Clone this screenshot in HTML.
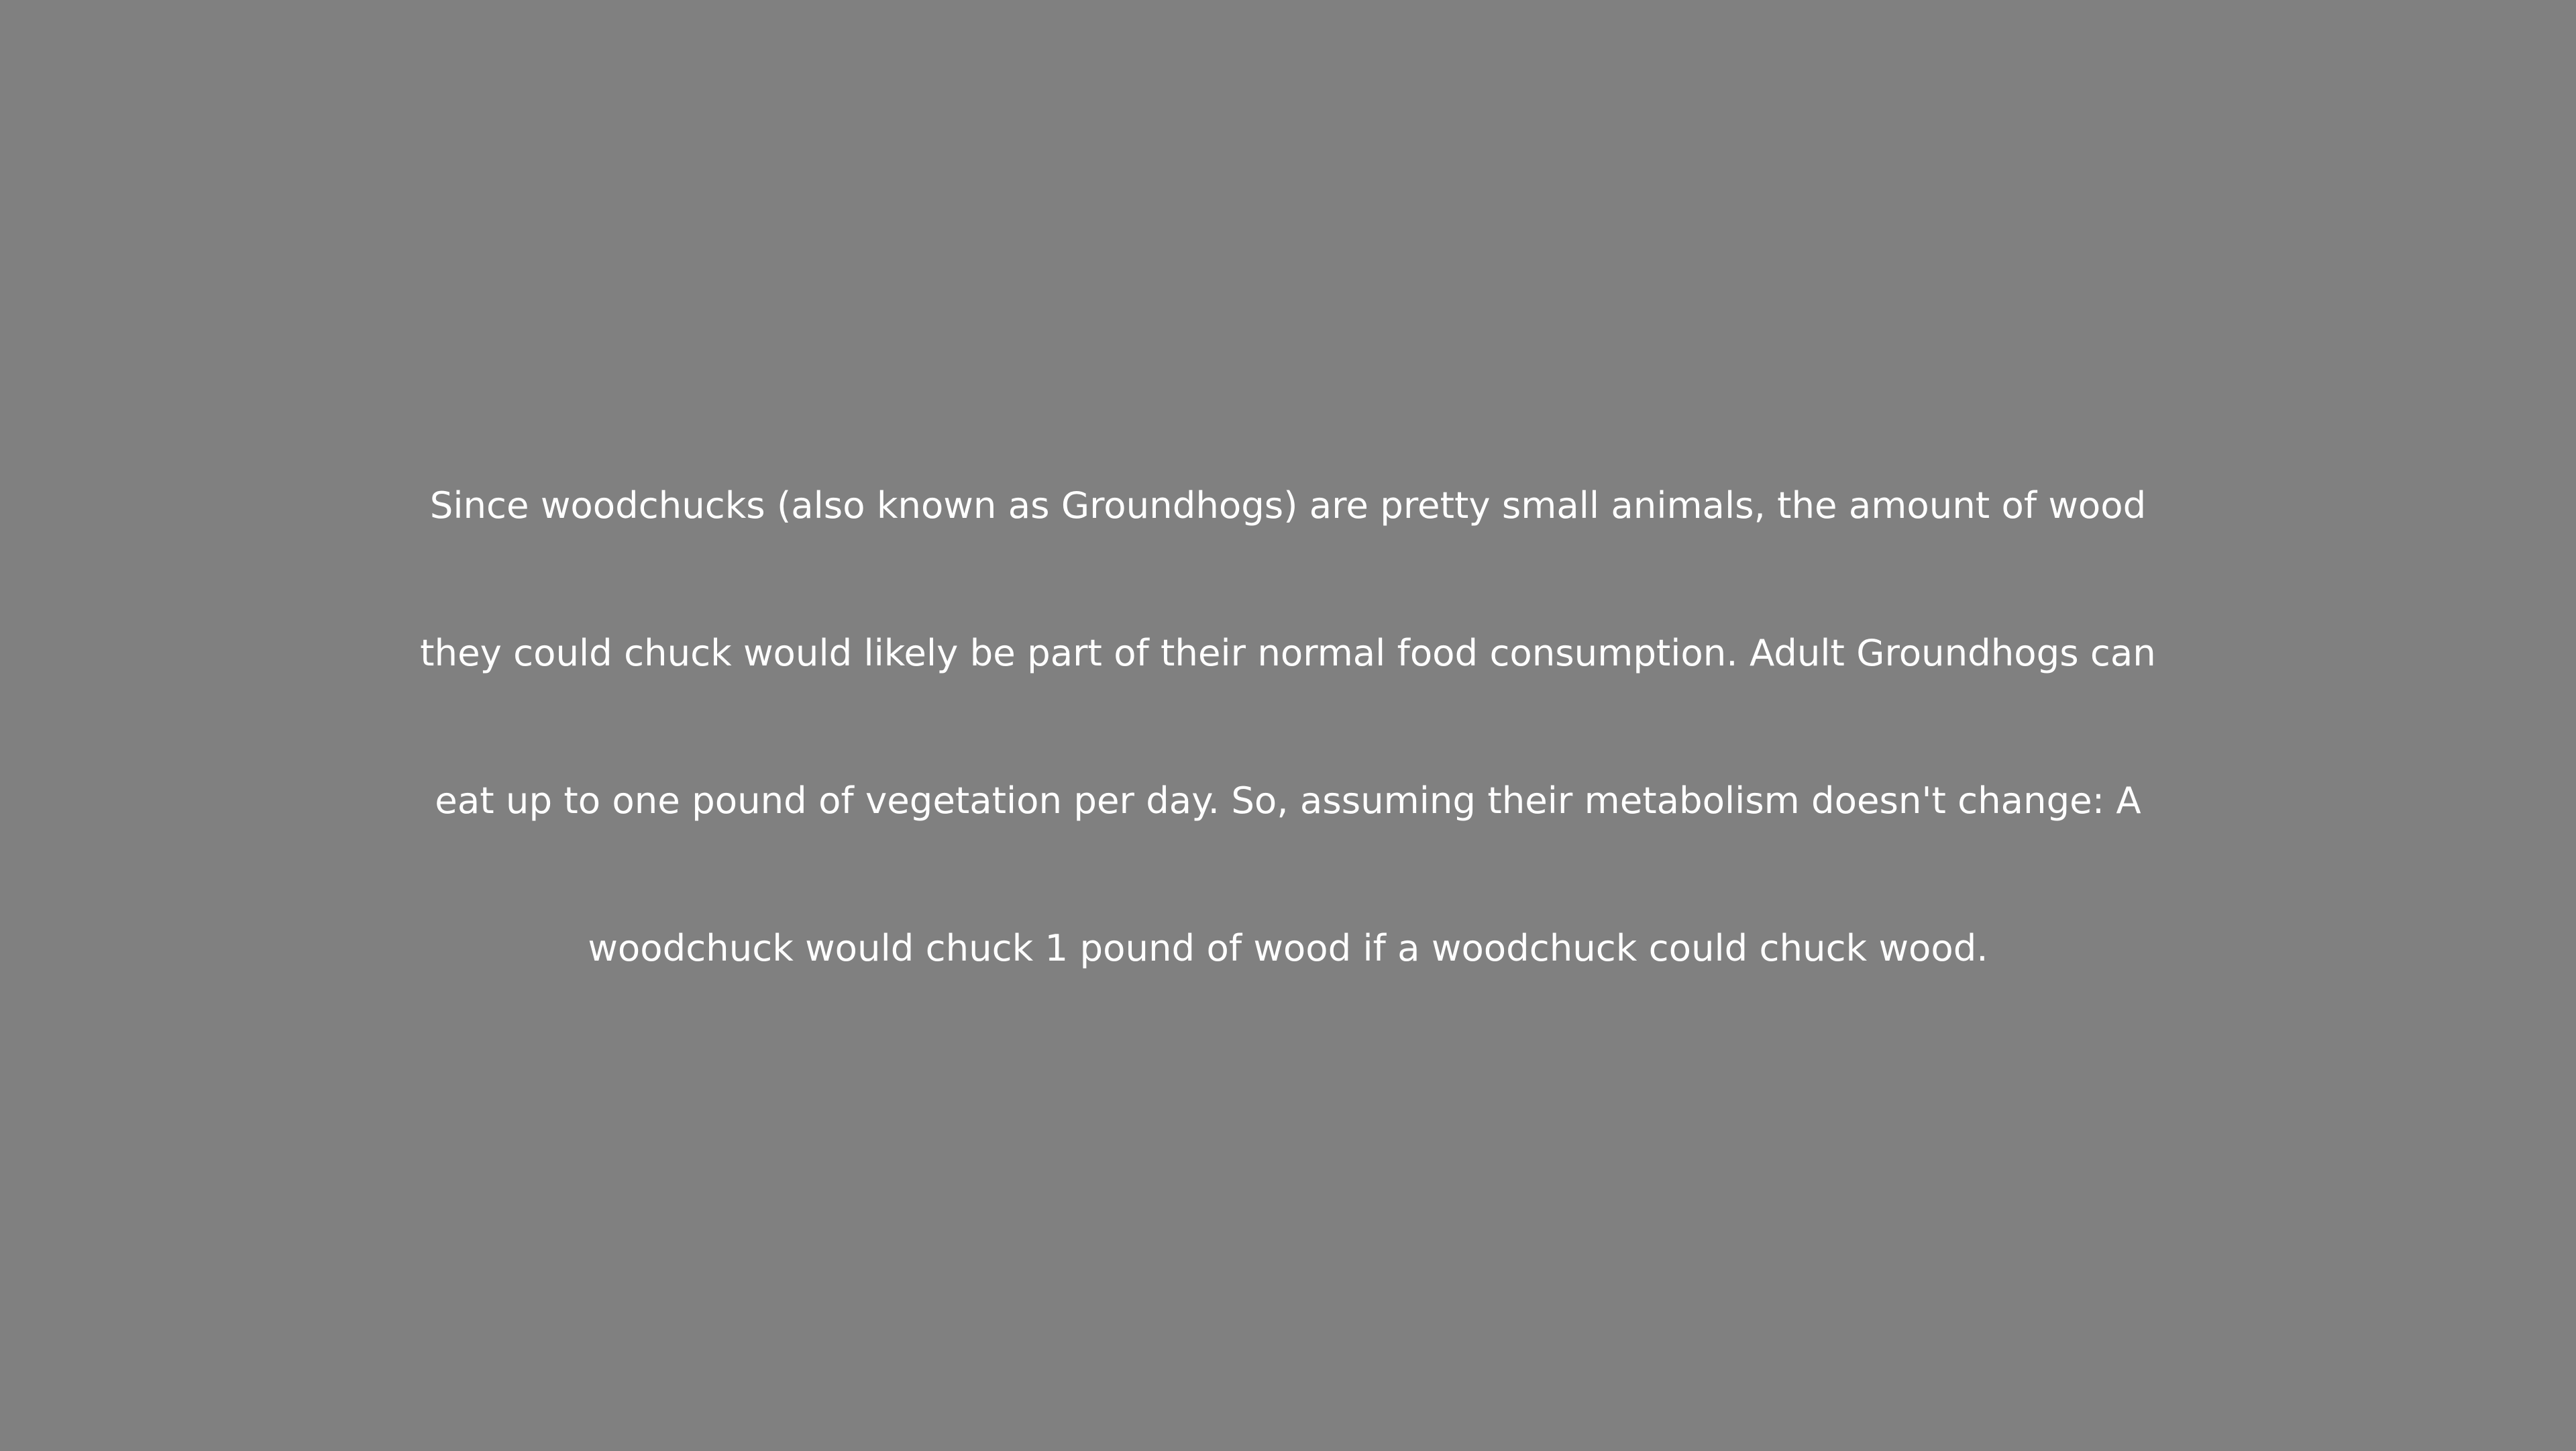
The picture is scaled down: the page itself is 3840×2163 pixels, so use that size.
<!DOCTYPE html>
<html><head><meta charset="utf-8"><style>
html,body{margin:0;padding:0;width:3840px;height:2160px;background:#808080;overflow:hidden}
.w{position:absolute;left:0;top:3px;width:3840px;height:2160px;display:flex;align-items:center;justify-content:center}
p{margin:0;text-align:center;color:#fff;font-family:"DejaVu Sans","Liberation Sans",sans-serif;font-size:54.5px;line-height:220px;white-space:nowrap}
</style></head><body><div class="w"><p>Since woodchucks (also known as Groundhogs) are pretty small animals, the amount of wood<br>they could chuck would likely be part of their normal food consumption. Adult Groundhogs can<br>eat up to one pound of vegetation per day. So, assuming their metabolism doesn't change: A<br>woodchuck would chuck 1 pound of wood if a woodchuck could chuck wood.</p></div></body></html>
